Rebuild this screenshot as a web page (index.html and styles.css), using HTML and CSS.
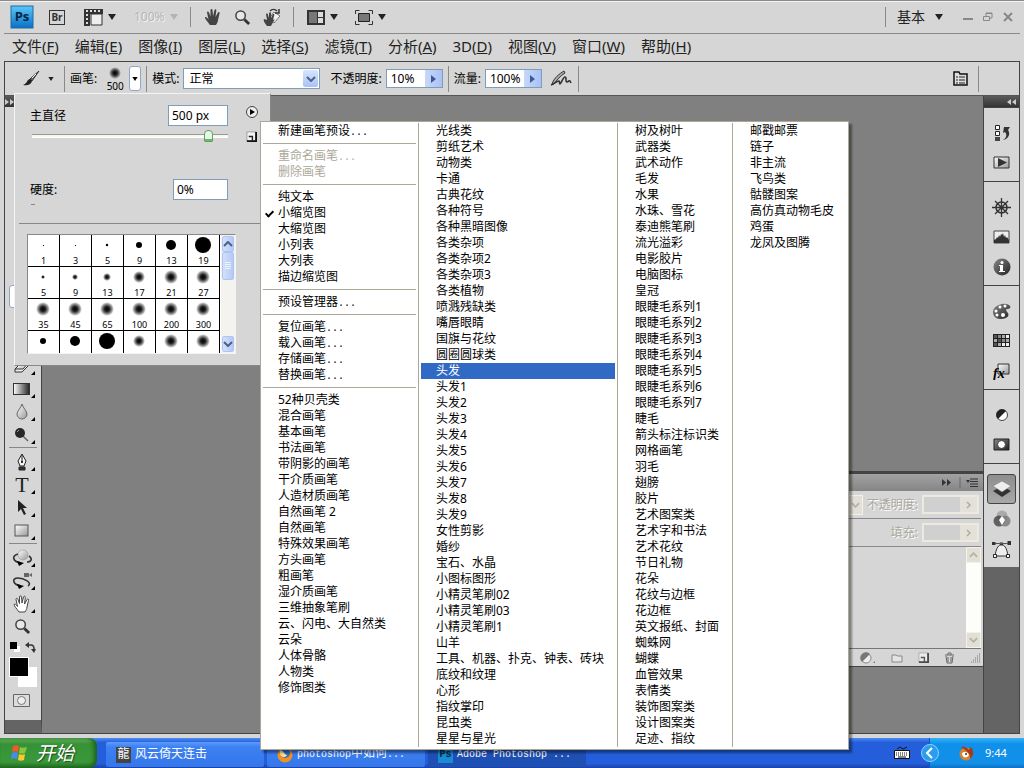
FILE: index.html
```html
<!DOCTYPE html>
<html lang="zh-CN">
<head>
    <meta charset="UTF-8">
    <meta name="viewport" content="width=device-width, initial-scale=1.0">
    <title>Adobe Photoshop</title>
    <link rel="stylesheet" href="styles.css">
</head>
<body>
    <!-- 公用渐变和图形 -->
    <svg class="defs" width="0" height="0" aria-hidden="true">
        <defs>
            <radialGradient id="soft"><stop offset="0" stop-color="#000"/><stop offset=".35" stop-color="#222"/><stop offset="1" stop-color="#000" stop-opacity="0"/></radialGradient>
            <linearGradient id="metal" x1="0" y1="0" x2="1" y2="1"><stop offset="0" stop-color="#fff"/><stop offset="1" stop-color="#999"/></linearGradient>
            <linearGradient id="dark" x1="0" y1="0" x2="1" y2="1"><stop offset="0" stop-color="#888"/><stop offset="1" stop-color="#222"/></linearGradient>
            <linearGradient id="fade"><stop offset="0" stop-color="#fff"/><stop offset="1" stop-color="#222"/></linearGradient>
            <symbol id="down" viewBox="0 0 8 6"><path d="M0 0h8L4 6z" fill="currentColor"/></symbol>
            <symbol id="chevron" viewBox="0 0 10 6"><path d="M1 1l4 4 4-4" fill="none" stroke="currentColor" stroke-width="2"/></symbol>
            <symbol id="zoomer" viewBox="0 0 18 18"><circle cx="7" cy="7" r="5" fill="#e8e8e8" stroke="#444" stroke-width="1.6"/><path d="M11 11l5 5" stroke="#333" stroke-width="3"/></symbol>
            <symbol id="newdoc" viewBox="0 0 12 12"><path d="M1 1h10v10H1z" fill="#f4f4f4" stroke="#999"/><path d="M11 1v10H1" fill="none" stroke="#111" stroke-width="2"/><path d="M3 6h4v5" fill="none" stroke="#222" stroke-width="1.5"/></symbol>
            <symbol id="hand" viewBox="0 0 18 18"><path d="M6 17C4 14 1 11 1 9.500c1-1 2 0 3.500 2L3 4.500c0-1.500 1.500-1.500 2 0l1.500 4V2c0-1.500 2-1.500 2 0l.5 6 1.500-6c.5-1.300 2-1 1.800.5L11.500 9 14 4.500c.8-1 2-.5 1.500 1L14 12c0 2-1 3-2 5z"/></symbol>
        </defs>
    </svg>

    <div class="desktop">
        <div class="app">
            <header class="app-bar">
                <svg class="ps-logo" width="24" height="24" viewBox="0 0 24 24">
                    <defs><linearGradient id="psbg" x1="0" y1="0" x2="0" y2="1"><stop offset="0" stop-color="#5ac8fa"/><stop offset="1" stop-color="#0a6fc4"/></linearGradient></defs>
                    <rect x="1" y="1" width="22" height="22" fill="url(#psbg)" stroke="#1c6aa8"/>
                    <text x="12" y="16" text-anchor="middle" class="ps-text">Ps</text>
                </svg>
                <button class="bridge" type="button">Br</button>
                <button class="icon-btn pair" type="button" aria-label="查看额外内容">
                    <svg width="19" height="17" viewBox="0 0 19 17"><path d="M0 0h19v5H6v12H0z" fill="#333"/><path d="M7 5h11v11H7z" fill="#eee" stroke="#333"/><path d="M2 2h2m2 0h2m2 0h2m2 0h2M2 6h2m-2 4h2m-2 4h2" stroke="#ddd" stroke-width="2"/></svg>
                    <svg class="arrow" width="8" height="6"><use href="#down"/></svg>
                </button>
                <button class="icon-btn zoom-level" type="button" disabled>100% <svg class="arrow" width="8" height="6"><use href="#down"/></svg></button>
                <span class="bar-sep"></span>
                <button class="icon-btn" type="button" aria-label="抓手"><svg width="18" height="18" fill="#444"><use href="#hand"/></svg></button>
                <button class="icon-btn" type="button" aria-label="缩放"><svg width="17" height="17"><use href="#zoomer"/></svg></button>
                <button class="icon-btn" type="button" aria-label="旋转视图">
                    <svg width="18" height="18" viewBox="0 0 18 18"><path d="M11 4l6 4-6 7-5-4z" fill="#f2f2f2" stroke="#777"/><path d="M4 18C2 15 0 13 1 11l3 1-1-6c1-1 2 0 2 1l1 3V5c1-1 2-1 2 0v5l2-4c1 0 2 0 1 2l-1 4 2-1-3 5-1 2z" fill="#444"/><path d="M7 3c2-2 5-2 7 0m2-2v4h-4" fill="none" stroke="#333" stroke-width="1.500"/></svg>
                </button>
                <span class="bar-sep"></span>
                <button class="icon-btn pair" type="button" aria-label="排列文档">
                    <svg width="18" height="15" viewBox="0 0 18 15"><path d="M0 0h18v15H0z" fill="#333"/><path d="M2 2h8v11H2z" fill="#777"/><path d="M11 2h5v5h-5zM11 8h5v5h-5z" fill="#ddd"/></svg>
                    <svg class="arrow" width="8" height="6"><use href="#down"/></svg>
                </button>
                <button class="icon-btn pair screen" type="button" aria-label="屏幕模式">
                    <svg width="18" height="15" viewBox="0 0 18 15"><path d="M.5 4V.5h4m9 0h4V4m0 7v3.500h-4m-9 0h-4V11" fill="none" stroke="#333"/><path d="M3.500 3.500h11v8h-11z" fill="#777" stroke="#222"/></svg>
                    <svg class="arrow" width="8" height="6"><use href="#down"/></svg>
                </button>
                <span class="bar-sep push"></span>
                <button class="icon-btn mode" type="button">基本 <svg class="arrow" width="8" height="6"><use href="#down"/></svg></button>
                <div class="win-btns">
                    <button type="button" aria-label="最小化"><svg width="10" height="10"><path d="M0 7h10" stroke="#888" stroke-width="2"/></svg></button>
                    <button type="button" aria-label="还原"><svg width="10" height="10" fill="none" stroke="#888"><path d="M3 4V1h6v5H7M.5 4.500h6v4h-6zM3 1.500h6"/></svg></button>
                    <button type="button" aria-label="关闭"><svg width="10" height="10"><path d="M1 1l8 8m0-8L1 9" stroke="#888" stroke-width="2"/></svg></button>
                </div>
            </header>

            <nav class="menu-bar">
                <button type="button">文件(<u>F</u>)</button>
                <button type="button">编辑(<u>E</u>)</button>
                <button type="button">图像(<u>I</u>)</button>
                <button type="button">图层(<u>L</u>)</button>
                <button type="button">选择(<u>S</u>)</button>
                <button type="button">滤镜(<u>T</u>)</button>
                <button type="button">分析(<u>A</u>)</button>
                <button type="button">3D(<u>D</u>)</button>
                <button type="button">视图(<u>V</u>)</button>
                <button type="button">窗口(<u>W</u>)</button>
                <button type="button">帮助(<u>H</u>)</button>
            </nav>

            <div class="frame">
                <div class="options-bar">
                    <span class="grip-v"></span>
                    <button class="icon-btn brush-tool" type="button" aria-label="画笔工具">
                        <svg width="18" height="18" viewBox="0 0 18 18"><path d="M17 1L8 9l2 2z" fill="#666" stroke="#333"/><path d="M8 9c-3 0-2 4-7 6 4 1 8 0 9-4z" fill="#222"/><path d="M10 8l4-4" stroke="#eee"/></svg>
                        <svg width="6" height="4"><use href="#down"/></svg>
                    </button>
                    <span class="opt-sep"></span>
                    <span class="opt-label">画笔:</span>
                    <button class="brush-thumb" type="button" aria-label="画笔预设">
                        <svg width="14" height="14"><circle cx="7" cy="7" r="6" fill="url(#soft)"/></svg>
                        <span>500</span>
                    </button>
                    <button class="drop" type="button" aria-label="打开画笔选取器"><svg width="6" height="4"><use href="#down"/></svg></button>
                    <span class="opt-sep"></span>
                    <label class="opt-label" for="blend">模式:</label>
                    <span class="select-box">
                        <select id="blend"><option>正常</option></select>
                        <span class="select-arrow"><svg width="10" height="6"><use href="#chevron"/></svg></span>
                    </span>
                    <label class="opt-label opacity-label" for="opacity">不透明度:</label>
                    <span class="spin"><input id="opacity" type="text" value="10%"><button type="button" aria-label="调整不透明度"><svg width="5" height="8"><path d="M0 0v8l5-4z" fill="#3c5a96"/></svg></button></span>
                    <span class="opt-sep"></span>
                    <label class="opt-label" for="flow">流量:</label>
                    <span class="spin"><input id="flow" type="text" value="100%"><button type="button" aria-label="调整流量"><svg width="5" height="8"><path d="M0 0v8l5-4z" fill="#3c5a96"/></svg></button></span>
                    <button class="icon-btn airbrush" type="button" aria-label="喷枪">
                        <svg width="22" height="18" viewBox="0 0 22 18"><path d="M2 14C4 8 9 4 14 1l1 2C10 6 7 10 4 14z" fill="#aaa" stroke="#333"/><path d="M1 15c4-1 5-4 8-4 1 0 0 3 1 3s3-7 5-7 0 5 2 5 1-2 3-1l1 2" fill="none" stroke="#333" stroke-width="1.600"/></svg>
                    </button>
                    <span class="opt-sep"></span>
                    <button class="icon-btn push" type="button" aria-label="切换画笔面板">
                        <svg width="15" height="15" viewBox="0 0 15 15"><path d="M1 3V1h5l1 2h7v11H1z" fill="#ddd" stroke="#111" stroke-width="1.500"/><path d="M3 6h2m1 0h6M3 9h2m1 0h6M3 12h2m1 0h6" stroke="#222"/></svg>
                    </button>
                    <span class="opt-sep last"></span>
                </div>

                <div class="workspace">
                    <aside class="tools">
                        <div class="panel-top"><svg width="10" height="6" fill="#ccc"><path d="M0 0v6l4-3zM5 0v6l4-3z"/></svg></div>
                        <div class="tool-list">
                            <button class="tool active" type="button" aria-label="画笔"></button>
                            <button class="tool" type="button" aria-label="仿制图章"></button>
                            <button class="tool" type="button" aria-label="历史记录画笔"></button>
                            <button class="tool more" type="button" aria-label="橡皮擦"><svg width="18" height="16"><path d="M2 11l7-7h7l-6 7zM2 11v3h7l7-7V4" fill="#eee" stroke="#333"/></svg></button>
                            <button class="tool more" type="button" aria-label="渐变"><svg width="18" height="14"><rect x=".5" y="1.500" width="16" height="11" fill="url(#fade)" stroke="#333"/></svg></button>
                            <button class="tool more" type="button" aria-label="模糊"><svg width="14" height="17"><path d="M7 1c1 4 5 7 5 10a5 5 0 0 1-10 0c0-3 4-6 5-10z" fill="url(#metal)" stroke="#666"/></svg></button>
                            <button class="tool more" type="button" aria-label="减淡"><svg width="16" height="16"><path d="M8 8l6 6" stroke="#666" stroke-width="1.500"/><circle cx="6" cy="6" r="5" fill="#262626"/><path d="M3 5l2-2" stroke="#999"/></svg></button>
                            <hr>
                            <button class="tool more" type="button" aria-label="钢笔"><svg width="14" height="18"><path d="M7 1l4 7-2 5H5L3 8z" fill="#f4f4f4" stroke="#222"/><path d="M7 2v7M4 14h6v3H4z" stroke="#222" fill="#333"/><circle cx="7" cy="9" r="1"/></svg></button>
                            <button class="tool more type-tool" type="button" aria-label="文字">T</button>
                            <button class="tool more" type="button" aria-label="路径选择"><svg width="14" height="17"><path d="M3 1v12l3-3 3 6 2-1-3-6h4z" fill="#222"/></svg></button>
                            <button class="tool more" type="button" aria-label="矩形"><svg width="16" height="14"><rect x="1" y="1" width="13" height="11" fill="url(#metal)" stroke="#555"/></svg></button>
                            <hr>
                            <button class="tool more" type="button" aria-label="3D 旋转"><svg width="20" height="18"><path d="M6 5C-1 7 1 13 9 14m8-7c4 3 2 6-2 6" fill="none" stroke="#333" stroke-width="1.600"/><circle cx="11" cy="6" r="5" fill="url(#metal)" stroke="#888" stroke-width=".5"/><path d="M5 12l7 2-5 3z"/></svg></button>
                            <button class="tool more" type="button" aria-label="3D 环绕"><svg width="20" height="18"><path d="M12 1h5v4h-5zM17 3l3-2v4z" fill="#666"/><path d="M9 14C1 13-1 6 6 6c6 0 15 5 10 8" fill="none" stroke="#333" stroke-width="1.600"/><path d="M5 12l7 2-5 3z"/></svg></button>
                            <button class="tool more" type="button" aria-label="抓手"><svg width="18" height="18" fill="#fff" stroke="#444"><use href="#hand"/></svg></button>
                            <button class="tool" type="button" aria-label="缩放"><svg width="17" height="17"><use href="#zoomer"/></svg></button>
                            <div class="swap">
                                <svg width="11" height="11"><path d="M4 4h6v6H4z" fill="#fff"/><path d="M0 0h7v7H0z"/></svg>
                                <svg width="11" height="11"><path d="M2 3h4q3 0 3 4" fill="none" stroke="#333" stroke-width="1.500"/><path d="M0 3l4-3v6zM9 11L6 7h5z" fill="#333"/></svg>
                            </div>
                            <div class="swatches">
                                <button class="fore" type="button" aria-label="前景色"></button>
                                <button class="back" type="button" aria-label="背景色"></button>
                            </div>
                            <button class="tool mask" type="button" aria-label="快速蒙版"><svg width="18" height="14"><path d="M.5.500h16v12H.5z" fill="#ddd" stroke="#666"/><circle cx="8.500" cy="6.500" r="4" fill="#eee" stroke="#777"/></svg></button>
                        </div>
                    </aside>

                    <main class="canvas">
                        <section class="layers">
                            <div class="layers-top">
                                <svg width="10" height="7" fill="#333"><path d="M0 0v7l4-3.500zM5 0v7l4-3.500z"/></svg>
                                <svg width="20" height="11"><path d="M1 0v11" stroke="#666"/><path d="M7 3h4L9 6z" fill="#333"/><path d="M11 2h8M11 4.500h8M11 7h8M11 9.500h8" stroke="#333"/></svg>
                            </div>
                            <div class="layers-row">
                                <button class="ghost-btn" type="button" disabled aria-label="混合模式"><svg width="9" height="6"><use href="#chevron"/></svg></button>
                                <label for="layerOpacity">不透明度:</label>
                                <span class="spin off"><input id="layerOpacity" type="text" disabled><button type="button" disabled aria-label="不透明度"><svg width="5" height="8"><path d="M1 1l3 3-3 3" fill="none" stroke="#aaa" stroke-width="1.500"/></svg></button></span>
                            </div>
                            <div class="layers-row">
                                <label for="layerFill">填充:</label>
                                <span class="spin off"><input id="layerFill" type="text" disabled><button type="button" disabled aria-label="填充"><svg width="5" height="8"><path d="M1 1l3 3-3 3" fill="none" stroke="#aaa" stroke-width="1.500"/></svg></button></span>
                            </div>
                            <div class="layers-list">
                                <div class="ghost-scroll">
                                    <button class="ghost-btn up" type="button" disabled aria-label="向上"><svg width="9" height="6"><use href="#chevron"/></svg></button>
                                    <button class="ghost-btn" type="button" disabled aria-label="向下"><svg width="9" height="6"><use href="#chevron"/></svg></button>
                                </div>
                            </div>
                            <div class="layers-foot">
                                <svg width="14" height="12"><path d="M1 1h11v10H1z" fill="#999" stroke="#555"/></svg>
                                <svg width="16" height="12"><circle cx="6" cy="6" r="5" fill="#eee" stroke="#888"/><path d="M2 10A5 5 0 0 1 10 2z" fill="#777"/><path d="M13 11h2v-2z" fill="#777"/></svg>
                                <svg width="12" height="10"><path d="M1 2h4l1 1h5v6H1z" fill="#e4e4e4" stroke="#888"/></svg>
                                <svg width="11" height="11" opacity=".7"><use href="#newdoc"/></svg>
                                <svg width="11" height="12"><path d="M1 3h9M4 3V1h3v2M2 4l1 7h5l1-7M4 5v5M7 5v5" fill="none" stroke="#666"/></svg>
                                <svg width="10" height="10"><path d="M1 9h1m1 0h1m1 0h1m1 0h1m1 0h1M3 7h1m1 0h1m1 0h1m1 0h1M5 5h1m1 0h1m1 0h1M7 3h1m1 0h1M9 1h1" stroke="#777"/></svg>
                            </div>
                        </section>
                    </main>

                    <aside class="dock">
                        <div class="panel-top end"><svg width="9" height="6" fill="#ccc"><path d="M4 0v6L0 3zM9 0v6L5 3z"/></svg></div>
                        <div class="dock-group">
                            <span class="grip-h"></span>
                            <button type="button" aria-label="历史记录"><svg width="16" height="18"><path d="M1.500 1.500h4v4h-4zM1.500 7.500h4v4h-4z" fill="#fff" stroke="#222"/><path d="M1 13h5v4H1z" fill="#444"/><path d="M9 16c4-2 4-6 2-8l-2 1 1-6h6l-2 3c3 4 0 9-5 10z" fill="#333"/></svg></button>
                            <button type="button" aria-label="动作"><svg width="18" height="14"><path d="M1 1h15v11H1z" fill="url(#metal)" stroke="#333"/><path d="M5 2v9l9-4.500z" fill="#333"/></svg></button>
                        </div>
                        <div class="dock-group">
                            <span class="grip-h"></span>
                            <button type="button" aria-label="导航器"><svg width="19" height="19" fill="none" stroke="#333"><circle cx="9.500" cy="9.500" r="5.500" stroke-width="1.500"/><circle cx="9.500" cy="9.500" r="1.500"/><path d="M9.500 0v19M0 9.500h19M3 3l13 13M16 3L3 16" stroke-width="1.300"/></svg></button>
                            <button type="button" aria-label="直方图"><svg width="18" height="14"><path d="M1 1h15v12H1z" fill="#eee" stroke="#444"/><path d="M1 13v-3l2-1 1-2 1 1 1-3 1 2 1-3 1 1 1-2 1 4 1-2 1 3 1-1 2 3v3z" fill="#333"/></svg></button>
                            <button type="button" aria-label="信息"><svg width="18" height="18"><circle cx="9" cy="9" r="8.500" fill="url(#dark)"/><path d="M6 7h4v6h2v1H6v-1h1V8H6z" fill="#fff"/><circle cx="9" cy="4.500" r="1.500" fill="#fff"/></svg></button>
                        </div>
                        <div class="dock-group">
                            <span class="grip-h"></span>
                            <button type="button" aria-label="颜色"><svg width="19" height="17"><path d="M1 9C1 4 8 0 14 1c6 1 5 5 2 5s-2 2 0 4c2 4-3 6-8 6-4 0-7-3-7-7z" fill="url(#dark)"/><g fill="#fff"><circle cx="4" cy="8" r="1.500"/><circle cx="8" cy="4" r="1.500"/><circle cx="13" cy="3" r="1.500"/><circle cx="5" cy="12" r="1.500"/><circle cx="11" cy="12" r="2"/></g></svg></button>
                            <button type="button" aria-label="色板"><svg width="18" height="14"><path d="M0 0h17v13H0z" fill="#222"/><path d="M1 1h3v3H1zM5 5h3v3H5zM1 9h3v3H1z" fill="#555"/><path d="M5 1h3v3H5zM9 5h3v3H9z" fill="#888"/><path d="M9 1h3v3H9zM13 5h3v3h-3zM5 9h3v3H5zM1 5h3v3H1z" fill="#aaa"/><path d="M13 1h3v3h-3zM9 9h3v3H9zM13 9h3v3h-3z" fill="#eee"/></svg></button>
                            <button class="fx" type="button" aria-label="样式"><svg width="18" height="18"><path d="M5 2h11v10H5z" fill="url(#metal)" stroke="#333"/><text x="0" y="16">fx</text></svg></button>
                        </div>
                        <div class="dock-group">
                            <span class="grip-h"></span>
                            <button type="button" aria-label="调整"><svg width="14" height="14"><circle cx="7" cy="7" r="5.500" fill="#fff" stroke="#444"/><path d="M3 11A5.500 5.500 0 0 1 11 3z" fill="#222"/></svg></button>
                            <button type="button" aria-label="蒙版"><svg width="18" height="14"><path d="M1 1h15v11H1z" fill="url(#dark)" stroke="#222"/><circle cx="8.500" cy="6.500" r="4" fill="#fff" stroke="#333"/></svg></button>
                        </div>
                        <div class="dock-group">
                            <span class="grip-h"></span>
                            <button class="on" type="button" aria-label="图层"><svg width="20" height="18"><path d="M10 6l9 5-9 6-9-6z" fill="#333"/><path d="M10 1l9 5-9 6-9-6z" fill="#eee" stroke="#777" stroke-width=".5"/></svg></button>
                            <button type="button" aria-label="通道"><svg width="18" height="18"><circle cx="9" cy="6" r="5.500" fill="#aaa"/><circle cx="6" cy="11" r="5.500" fill="#444" fill-opacity=".8"/><circle cx="12" cy="11" r="5.500" fill="#777" fill-opacity=".8"/><path d="M9 6l3 4-3 5-3-5z" fill="#fff"/></svg></button>
                            <button type="button" aria-label="路径"><svg width="19" height="17"><path d="M3 15C4 9 5 5 9.500 3 14 5 15 9 16 15z" fill="#eee" stroke="#333"/><path d="M0 1h3.500v3H0zM15.500 0H19v4h-3.500zM8 1.500h3v3H8z" fill="#333"/><path d="M3 2.500h13" stroke="#555"/><path d="M1.500 13.500h3v3h-3zM14.500 13.500h3v3h-3z" fill="#fff" stroke="#222"/></svg></button>
                        </div>
                    </aside>
                </div>
            </div>
        </div>

        <footer class="taskbar">
            <button class="start" type="button">
                <svg width="20" height="18" viewBox="0 0 20 18"><path d="M3 2c2-1 4-1 6 0L8 8C6 7 4 7 2 8z" fill="#f0592b"/><path d="M10 3c2 1 4 1 7 0l-2 6c-2 1-4 1-6 0z" fill="#8cc63e"/><path d="M2 9c2-1 4-1 6 0l-1 6c-2-1-4-1-6 0z" fill="#4a8af0"/><path d="M9 10c2 1 4 1 6 0l-1 6c-2 1-4 1-6 0z" fill="#fbc92c"/></svg>
                <span>开始</span>
            </button>
            <button class="task" type="button"><span class="dragon">龍</span><span class="cjk">风云倚天连击</span></button>
            <button class="task" type="button"><svg width="16" height="16"><circle cx="8" cy="8" r="7.500" fill="#f09020"/><circle cx="8" cy="6" r="5" fill="#2a6fd0"/><path d="M3 3c5 1 3 4 7 5-1 3-6 3-7-1z" fill="#ffe08a"/></svg><span>photoshop<span class="cjk">中如何</span>...</span></button>
            <button class="task pressed" type="button"><span class="mini-ps">Ps</span><span>Adobe Photoshop ...</span></button>
            <svg class="keyboard" width="16" height="14"><path d="M3 3l3-2 3 2 4-2" fill="none" stroke="#111"/><path d="M.5 4.500h15v8H.5z" fill="#fff" stroke="#111"/><path d="M2 7h12M2 9h12" stroke="#111" stroke-dasharray="1 1"/><path d="M4 11h8" stroke="#111"/></svg>
            <div class="tray">
                <button class="tray-toggle" type="button" aria-label="显示隐藏的图标"><svg width="18" height="18"><circle cx="9" cy="9" r="8.500" fill="#2a9df0" stroke="#8fd0ff"/><path d="M11 4L6 9l5 5" fill="none" stroke="#fff" stroke-width="2"/></svg></button>
                <svg width="16" height="16"><circle cx="7" cy="9" r="6.500" fill="#d9822b"/><path d="M2 2c4-1 6 1 8 3l2-3c3 4 3 9-1 12 1-5-4-9-9-12z" fill="#a8381c"/><path d="M3 8c3-2 6-1 7 2-2 4-7 3-7-2z" fill="#fff"/><circle cx="7" cy="9" r="1" fill="#333"/></svg>
                <time>9:44</time>
            </div>
        </footer>
    </div>

    <!-- 画笔选取器 -->
    <div class="picker">
        <div class="picker-head">
            <div class="picker-controls">
                <div class="field-row"><label for="size">主直径</label><input id="size" class="num wide" type="text" value="500 px"></div>
                <input class="slider" type="range" min="0" max="100" value="92" aria-label="主直径">
                <div class="field-row hardness"><label for="hard">硬度:</label><input id="hard" class="num" type="text" value="0%"></div>
                <div class="stub"></div>
            </div>
            <div class="picker-side">
                <button type="button" aria-label="画笔菜单"><svg width="12" height="12"><circle cx="6" cy="6" r="5.500" fill="#eee" stroke="#444"/><path d="M4 3v6l5-3z"/></svg></button>
                <button type="button" aria-label="新建画笔"><svg width="11" height="11"><use href="#newdoc"/></svg></button>
            </div>
        </div>
        <div class="brush-box">
            <div class="brush-grid">
                <button type="button"><svg width="31" height="21"><path d="M15 10h1v1h-1z"/></svg>1</button>
                <button type="button"><svg width="31" height="21"><path d="M15 10h1v1h-1z"/></svg>3</button>
                <button type="button"><svg width="31" height="21"><circle cx="15" cy="10" r="1.200"/></svg>5</button>
                <button type="button"><svg width="31" height="21"><circle cx="15" cy="10" r="3"/></svg>9</button>
                <button type="button"><svg width="31" height="21"><circle cx="15" cy="10" r="5"/></svg>13</button>
                <button type="button"><svg width="31" height="21"><circle cx="15" cy="10" r="8"/></svg>19</button>
                <button type="button"><svg width="31" height="21"><circle cx="15" cy="10" r="2" fill="url(#soft)"/></svg>5</button>
                <button type="button"><svg width="31" height="21"><circle cx="15" cy="10" r="3" fill="url(#soft)"/></svg>9</button>
                <button type="button"><svg width="31" height="21"><circle cx="15" cy="10" r="4" fill="url(#soft)"/></svg>13</button>
                <button type="button"><svg width="31" height="21"><circle cx="15" cy="10" r="6" fill="url(#soft)"/></svg>17</button>
                <button type="button"><svg width="31" height="21"><circle cx="15" cy="10" r="7" fill="url(#soft)"/></svg>21</button>
                <button type="button"><svg width="31" height="21"><circle cx="15" cy="10" r="7" fill="url(#soft)"/></svg>27</button>
                <button type="button"><svg width="31" height="21"><circle cx="15" cy="10" r="7" fill="url(#soft)"/></svg>35</button>
                <button type="button"><svg width="31" height="21"><circle cx="15" cy="10" r="7" fill="url(#soft)"/></svg>45</button>
                <button type="button"><svg width="31" height="21"><circle cx="15" cy="10" r="7" fill="url(#soft)"/></svg>65</button>
                <button type="button"><svg width="31" height="21"><circle cx="15" cy="10" r="7" fill="url(#soft)"/></svg>100</button>
                <button type="button"><svg width="31" height="21"><circle cx="15" cy="10" r="7" fill="url(#soft)"/></svg>200</button>
                <button type="button"><svg width="31" height="21"><circle cx="15" cy="10" r="7" fill="url(#soft)"/></svg>300</button>
                <button type="button" aria-label="硬边 9"><svg width="31" height="21"><circle cx="15" cy="10" r="3"/></svg></button>
                <button type="button" aria-label="硬边 13"><svg width="31" height="21"><circle cx="15" cy="10" r="5"/></svg></button>
                <button type="button" aria-label="硬边 19"><svg width="31" height="21"><circle cx="15" cy="10" r="8"/></svg></button>
                <button type="button" aria-label="柔边 17"><svg width="31" height="21"><circle cx="15" cy="10" r="6" fill="url(#soft)"/></svg></button>
                <button type="button" aria-label="柔边 45"><svg width="31" height="21"><circle cx="15" cy="10" r="7" fill="url(#soft)"/></svg></button>
                <button type="button" aria-label="柔边 65"><svg width="31" height="21"><circle cx="15" cy="10" r="7" fill="url(#soft)"/></svg></button>
            </div>
            <div class="xp-scroll">
                <button class="up" type="button" aria-label="向上滚动"><svg width="10" height="6"><use href="#chevron"/></svg></button>
                <div class="xp-thumb"><svg width="6" height="8"><path d="M0 .5h6M0 2.500h6M0 4.500h6M0 6.500h6" stroke="#eef4fe"/></svg></div>
                <button class="down" type="button" aria-label="向下滚动"><svg width="10" height="6"><use href="#chevron"/></svg></button>
            </div>
        </div>
    </div>

    <!-- 画笔弹出菜单 -->
    <div class="popup" role="menu">
        <div class="col col-main">
            <button type="button">新建画笔预设<i>...</i></button>
            <hr>
            <button type="button" disabled>重命名画笔<i>...</i></button>
            <button type="button" disabled>删除画笔</button>
            <hr>
            <button type="button">纯文本</button>
            <button type="button" class="checked">小缩览图</button>
            <button type="button">大缩览图</button>
            <button type="button">小列表</button>
            <button type="button">大列表</button>
            <button type="button">描边缩览图</button>
            <hr>
            <button type="button">预设管理器<i>...</i></button>
            <hr>
            <button type="button">复位画笔<i>...</i></button>
            <button type="button">载入画笔<i>...</i></button>
            <button type="button">存储画笔<i>...</i></button>
            <button type="button">替换画笔<i>...</i></button>
            <hr>
            <button type="button">52种贝壳类</button>
            <button type="button">混合画笔</button>
            <button type="button">基本画笔</button>
            <button type="button">书法画笔</button>
            <button type="button">带阴影的画笔</button>
            <button type="button">干介质画笔</button>
            <button type="button">人造材质画笔</button>
            <button type="button">自然画笔 2</button>
            <button type="button">自然画笔</button>
            <button type="button">特殊效果画笔</button>
            <button type="button">方头画笔</button>
            <button type="button">粗画笔</button>
            <button type="button">湿介质画笔</button>
            <button type="button">三维抽象笔刷</button>
            <button type="button">云、闪电、大自然类</button>
            <button type="button">云朵</button>
            <button type="button">人体骨骼</button>
            <button type="button">人物类</button>
            <button type="button">修饰图类</button>
        </div>
        <div class="col col-wide">
            <button type="button">光线类</button>
            <button type="button">剪纸艺术</button>
            <button type="button">动物类</button>
            <button type="button">卡通</button>
            <button type="button">古典花纹</button>
            <button type="button">各种符号</button>
            <button type="button">各种黑暗图像</button>
            <button type="button">各类杂项</button>
            <button type="button">各类杂项2</button>
            <button type="button">各类杂项3</button>
            <button type="button">各类植物</button>
            <button type="button">喷溅残缺类</button>
            <button type="button">嘴唇眼睛</button>
            <button type="button">国旗与花纹</button>
            <button type="button">圆圈圆球类</button>
            <button type="button" class="current">头发</button>
            <button type="button">头发1</button>
            <button type="button">头发2</button>
            <button type="button">头发3</button>
            <button type="button">头发4</button>
            <button type="button">头发5</button>
            <button type="button">头发6</button>
            <button type="button">头发7</button>
            <button type="button">头发8</button>
            <button type="button">头发9</button>
            <button type="button">女性剪影</button>
            <button type="button">婚纱</button>
            <button type="button">宝石、水晶</button>
            <button type="button">小图标图形</button>
            <button type="button">小精灵笔刷02</button>
            <button type="button">小精灵笔刷03</button>
            <button type="button">小精灵笔刷1</button>
            <button type="button">山羊</button>
            <button type="button">工具、机器、扑克、钟表、砖块</button>
            <button type="button">底纹和纹理</button>
            <button type="button">心形</button>
            <button type="button">指纹掌印</button>
            <button type="button">昆虫类</button>
            <button type="button">星星与星光</button>
        </div>
        <div class="col">
            <button type="button">树及树叶</button>
            <button type="button">武器类</button>
            <button type="button">武术动作</button>
            <button type="button">毛发</button>
            <button type="button">水果</button>
            <button type="button">水珠、雪花</button>
            <button type="button">泰迪熊笔刷</button>
            <button type="button">流光溢彩</button>
            <button type="button">电影胶片</button>
            <button type="button">电脑图标</button>
            <button type="button">皇冠</button>
            <button type="button">眼睫毛系列1</button>
            <button type="button">眼睫毛系列2</button>
            <button type="button">眼睫毛系列3</button>
            <button type="button">眼睫毛系列4</button>
            <button type="button">眼睫毛系列5</button>
            <button type="button">眼睫毛系列6</button>
            <button type="button">眼睫毛系列7</button>
            <button type="button">睫毛</button>
            <button type="button">箭头标注标识类</button>
            <button type="button">网格画笔</button>
            <button type="button">羽毛</button>
            <button type="button">翅膀</button>
            <button type="button">胶片</button>
            <button type="button">艺术图案类</button>
            <button type="button">艺术字和书法</button>
            <button type="button">艺术花纹</button>
            <button type="button">节日礼物</button>
            <button type="button">花朵</button>
            <button type="button">花纹与边框</button>
            <button type="button">花边框</button>
            <button type="button">英文报纸、封面</button>
            <button type="button">蜘蛛网</button>
            <button type="button">蝴蝶</button>
            <button type="button">血管效果</button>
            <button type="button">表情类</button>
            <button type="button">装饰图案类</button>
            <button type="button">设计图案类</button>
            <button type="button">足迹、指纹</button>
        </div>
        <div class="col">
            <button type="button">邮戳邮票</button>
            <button type="button">链子</button>
            <button type="button">非主流</button>
            <button type="button">飞鸟类</button>
            <button type="button">骷髅图案</button>
            <button type="button">高仿真动物毛皮</button>
            <button type="button">鸡蛋</button>
            <button type="button">龙凤及图腾</button>
        </div>
    </div>
</body>
</html>
```

FILE: styles.css
```css
* {
    box-sizing: border-box;
}

body {
    margin: 0;
    font-family: "Noto Sans", "Noto Sans CJK SC", sans-serif;
    font-size: 12px;
    line-height: 16px;
    color: #000;
    overflow: hidden;
}

button {
    padding: 0;
    border: none;
    background: none;
    font: inherit;
    color: inherit;
    white-space: nowrap;
}

svg {
    display: block;
    flex: none;
}

.defs {
    position: absolute;
}

.desktop {
    display: flex;
    flex-direction: column;
    height: 100vh;
}

/* 程序窗口 */
.app {
    flex: 1;
    display: flex;
    flex-direction: column;
    min-height: 0;
    padding: 0 4px 4px;
    border-top: 1px solid #8a8a8a;
    background: #d6d6d6;
    box-shadow: inset 0 1px 0 #f4f4f4;
}

.app-bar {
    display: flex;
    align-items: center;
    height: 33px;
    padding: 0 7px 0 6px;
    border-bottom: 1px solid #8a8a8a;
}

.ps-text {
    font: bold 13px "Open Sans", sans-serif;
    fill: #06243e;
}

.bridge {
    width: 16px;
    height: 15px;
    margin: 0 19px 0 15px;
    border: 1px solid #333;
    font-size: 10px;
    font-weight: bold;
    line-height: 13px;
    color: #333;
}

.icon-btn {
    display: flex;
    align-items: center;
    color: #222;
}

.pair {
    gap: 5px;
}

.zoom-level {
    gap: 5px;
    margin-left: 18px;
    font-size: 12px;
    color: #b4b4b4;
    text-shadow: 1px 1px 0 #f4f4f4;
}

.bar-sep {
    width: 1px;
    height: 20px;
    margin: 0 13px 0 12px;
    background: #8a8a8a;
}

.app-bar .icon-btn + .icon-btn:not(.zoom-level) {
    margin-left: 12px;
}

.app-bar .icon-btn + .icon-btn.screen {
    margin-left: 17px;
}

.app-bar .push,
.options-bar .push {
    margin-left: auto;
}

.app-bar .push {
    margin-right: 11px;
}

.mode {
    gap: 10px;
    font-size: 14px;
}

.win-btns {
    display: flex;
    gap: 10px;
    margin-left: 20px;
}

.menu-bar {
    display: flex;
    align-items: center;
    gap: 16px;
    height: 27px;
    padding: 0 8px 3px;
    font-size: 15px;
    line-height: 20px;
    color: #222;
}

.frame {
    flex: 1;
    display: flex;
    flex-direction: column;
    min-height: 0;
    border: 1px solid #444;
}

/* 选项栏 */
.options-bar {
    display: flex;
    align-items: center;
    height: 34px;
    padding-left: 4px;
    border-bottom: 1px solid #555;
}

.grip-v {
    width: 4px;
    height: 26px;
    background: radial-gradient(#888 35%, transparent 40%) 0 0 / 2px 2px;
}

.brush-tool {
    gap: 8px;
    margin: 0 10px 0 9px;
}

.opt-sep {
    width: 1px;
    height: 26px;
    margin: 0 5px;
    background: #8a8a8a;
}

.brush-tool + .opt-sep {
    margin-left: 0;
}

.opt-sep.last {
    margin: 0 40px 0 10px;
}

.opt-label {
    margin-right: 4px;
}

.opacity-label {
    margin-left: 10px;
}

.brush-thumb {
    display: flex;
    flex-direction: column;
    align-items: center;
    width: 28px;
    font-size: 10px;
    line-height: 12px;
}

.drop {
    display: flex;
    align-items: center;
    justify-content: center;
    width: 12px;
    height: 25px;
    border: 1px solid #8fa6cc;
    border-radius: 3px;
    background: #fff;
}

.select-box {
    position: relative;
    width: 137px;
    height: 21px;
}

.select-box select {
    width: 100%;
    height: 100%;
    padding: 0 5px;
    border: 1px solid #7f9db9;
    border-radius: 0;
    appearance: none;
    background: #fff;
    font: inherit;
}

.select-arrow {
    position: absolute;
    top: 2px;
    right: 2px;
    display: flex;
    align-items: center;
    justify-content: center;
    width: 15px;
    height: 17px;
    border-radius: 2px;
    background: linear-gradient(#d8e4fd, #a9c2f5);
    color: #4d6185;
    pointer-events: none;
}

.spin {
    display: flex;
    width: 57px;
    height: 19px;
    border: 1px solid #7f9db9;
    background: #fff;
}

.spin input {
    flex: 1;
    min-width: 0;
    padding: 0 0 0 4px;
    border: none;
    background: none;
    font: inherit;
}

.spin button {
    display: flex;
    align-items: center;
    justify-content: center;
    width: 17px;
    background: linear-gradient(90deg, #c8d8fa, #a9c2f5);
}

.airbrush {
    margin: 0 1px 0 8px;
}

/* 工作区 */
.workspace {
    flex: 1;
    display: flex;
    min-height: 0;
    background: #808080;
}

.panel-top {
    display: flex;
    align-items: center;
    flex: none;
    height: 11px;
    background: linear-gradient(#5c5c5c, #333);
}

.panel-top.end {
    justify-content: flex-end;
    padding-right: 3px;
}

.tools {
    display: flex;
    flex-direction: column;
    width: 37px;
    border-right: 1px solid #444;
    border-bottom: 13px solid #646464;
    background: #d6d6d6;
}

.tool-list {
    flex: 1;
    display: flex;
    flex-direction: column;
    justify-content: flex-end;
    padding: 0 4px 8px;
}

.tool-list hr {
    width: 100%;
    height: 1px;
    margin: 1px 0 2px;
    border: none;
    background: #888;
}

.tool {
    position: relative;
    display: flex;
    align-items: center;
    justify-content: center;
    flex: none;
    height: 23px;
    padding-right: 2px;
}

.tool.active {
    border: 1px solid #8fa6cc;
    border-radius: 3px;
    background: #fff;
}

.tool.more::after {
    content: "";
    position: absolute;
    right: 2px;
    bottom: 2px;
    border: 2px solid;
    border-color: transparent #000 #000 transparent;
}

.type-tool {
    font: 22px/22px "Liberation Serif", serif;
    color: #222;
}

.swap {
    display: flex;
    justify-content: space-between;
    padding: 4px 1px;
}

.swatches {
    display: flex;
    height: 31px;
}

.fore,
.back {
    width: 20px;
    height: 20px;
    border: 1px solid #fff;
    background: #000;
}

.fore {
    z-index: 1;
}

.back {
    margin: 10px 0 0 -11px;
    background: #fff;
}

.mask {
    margin-top: 1px;
}

.canvas {
    flex: 1;
    display: flex;
    align-items: flex-end;
    justify-content: flex-end;
    min-width: 0;
}

/* 图层面板 */
.layers {
    width: 260px;
    margin-bottom: 66px;
    border-top: 3px solid #444;
    border-bottom: 1px solid #444;
    background: #d6d6d6;
    color: #aaa89c;
    text-shadow: 1px 1px 0 #fff;
}

.layers-top {
    display: flex;
    align-items: center;
    justify-content: flex-end;
    gap: 7px;
    height: 17px;
    padding-right: 4px;
    background: linear-gradient(#a2a2a2, #858585);
}

.layers-row {
    display: flex;
    align-items: center;
    justify-content: flex-end;
    gap: 4px;
    height: 28px;
    margin-right: 2px;
    padding-right: 2px;
    border-bottom: 1px solid #888;
}

.spin.off {
    border: 2px solid #eceae0;
    background: #d0d0d0;
}

.spin.off button {
    background: #e4e2d8;
}

.ghost-btn {
    display: flex;
    align-items: center;
    justify-content: center;
    width: 15px;
    height: 20px;
    border: 1px solid #f4f2e8;
    background: #e2e0d6;
    color: #b4b2a6;
}

.layers-list {
    display: flex;
    justify-content: flex-end;
    height: 102px;
    margin-right: 2px;
    border-bottom: 1px solid #777;
}

.ghost-scroll {
    display: flex;
    flex-direction: column;
    justify-content: space-between;
    background: #fdfdfa;
}

.ghost-scroll .ghost-btn {
    height: 16px;
}

.up svg {
    transform: rotate(180deg);
}

.layers-foot {
    display: flex;
    align-items: center;
    justify-content: flex-end;
    gap: 15px;
    height: 17px;
    padding-right: 3px;
}

/* 右侧图标栏 */
.dock {
    display: flex;
    flex-direction: column;
    width: 36px;
    border-left: 1px solid #444;
    background: #646464;
}

.dock-group {
    display: flex;
    flex-direction: column;
    align-items: center;
    padding: 4px 0 3px;
    border-top: 1px solid #444;
    background: #d6d6d6;
}

.grip-h {
    width: 28px;
    height: 4px;
    margin-bottom: 2px;
    background: radial-gradient(#888 35%, transparent 40%) 0 0 / 2px 2px;
}

.dock-group button {
    display: flex;
    align-items: center;
    justify-content: center;
    width: 29px;
    height: 30px;
}

.dock-group .on {
    border: 1px solid #444;
    border-radius: 3px;
    background: linear-gradient(#8e8e8e, #a8a8a8);
}

.fx text {
    font: italic bold 14px "Liberation Serif", serif;
}

/* 任务栏 */
.taskbar {
    display: flex;
    align-items: center;
    height: 30px;
    background: linear-gradient(#4a8cf4, #245edb 15%, #245edb 85%, #1941a5);
    color: #fff;
}

.start {
    display: flex;
    align-items: center;
    gap: 6px;
    width: 97px;
    height: 30px;
    margin-right: 9px;
    padding-left: 10px;
    border-radius: 0 8px 8px 0;
    background: linear-gradient(#6cb866, #379237 20%, #3a983a 80%, #236b23);
    box-shadow: inset -3px 0 4px #1d611d;
    font-size: 19px;
    font-style: italic;
    line-height: 24px;
    text-shadow: 1px 1px 1px #1d4a1d;
}

.task {
    display: flex;
    align-items: center;
    gap: 4px;
    width: 158px;
    height: 25px;
    margin: 3px 3px 0 0;
    padding-left: 10px;
    border-radius: 2px;
    background: linear-gradient(#5f9dfb, #3c80f2 20%, #3577ea);
    font: 10px/16px "Liberation Mono", "Noto Sans CJK SC", monospace;
}

.cjk,
.dragon {
    font-size: 12px;
}

.task.pressed {
    background: #1e50b4;
}

.dragon {
    width: 15px;
    background: #444;
    text-align: center;
}

.mini-ps {
    width: 15px;
    background: #1a8ad4;
    color: #06243e;
    font-weight: bold;
    text-align: center;
}

.keyboard {
    margin: 0 19px 0 auto;
}

.tray {
    display: flex;
    align-items: center;
    width: 95px;
    height: 30px;
    border-left: 1px solid #0c59b9;
    background: linear-gradient(#35b2f8, #0f90ea 20%, #1290e8 85%, #0d6fc0);
    font-size: 11px;
}

.tray-toggle {
    margin: 0 20px 0 -9px;
}

.tray time {
    margin-left: 10px;
}

/* 画笔选取器 */
.picker {
    position: absolute;
    top: 93px;
    left: 14px;
    width: 257px;
    height: 273px;
    padding: 11px 10px 0 4px;
    border: 1px solid #f4f4f4;
    border-right-color: #888;
    border-bottom-color: #888;
    background: #d6d6d6;
}

.picker-head {
    display: flex;
    gap: 18px;
    height: 119px;
    padding-left: 11px;
    border-bottom: 1px solid #888;
}

.picker-controls {
    width: 198px;
}

.field-row {
    display: flex;
    align-items: center;
    justify-content: space-between;
}

.num {
    width: 55px;
    height: 21px;
    padding: 0 3px;
    border: 1px solid #7f9db9;
    font: inherit;
}

.num.wide {
    width: 60px;
}

.slider {
    display: block;
    width: 196px;
    height: 12px;
    margin: 4px 0 0 2px;
    appearance: none;
    background: linear-gradient(#9a9a94 1px, #f4f4ee 1px, #fff) 0 4px / 100% 4px no-repeat;
}

.slider::-webkit-slider-thumb {
    appearance: none;
    width: 9px;
    height: 12px;
    border: 1px solid #6a9a6a;
    border-radius: 4px 4px 1px 1px;
    background: #e8f6e6;
    box-shadow: inset 0 -2px 0 #5cc05c;
}

.hardness {
    margin-top: 37px;
}

.stub {
    width: 4px;
    height: 1px;
    margin: 4px 0 0 1px;
    background: #888;
}

.picker-side {
    display: flex;
    flex-direction: column;
    gap: 13px;
    padding-top: 1px;
}

.brush-box {
    display: flex;
    width: 209px;
    height: 120px;
    margin: 10px 0 0 8px;
    border: 1px solid #888;
    border-right-color: #f4f4f4;
    border-bottom-color: #f4f4f4;
}

.brush-grid {
    display: grid;
    grid-template-columns: repeat(6, 32px);
    grid-auto-rows: 32px;
    width: 193px;
    background: #fff;
    overflow: hidden;
}

.brush-grid button {
    display: flex;
    flex-direction: column;
    border-right: 1px solid #000;
    border-bottom: 1px solid #000;
    align-items: center;
    font-size: 9px;
    line-height: 10px;
}

.xp-scroll {
    display: flex;
    flex-direction: column;
    flex: 1;
    padding: 1px;
    background: #f4f3ee;
}

.xp-scroll button,
.xp-thumb {
    display: flex;
    align-items: center;
    justify-content: center;
    height: 16px;
    border: 1px solid #b0c4f0;
    border-radius: 2px;
    background: linear-gradient(90deg, #d4e0fc, #b4c9f6);
    color: #4d6185;
}

.xp-thumb {
    height: 28px;
}

.xp-scroll .down {
    margin-top: auto;
}

/* 弹出菜单 */
.popup {
    position: absolute;
    top: 121px;
    left: 260px;
    display: flex;
    padding: 1px 0 2px;
    border: 1px solid #aca899;
    background: #fff;
    box-shadow: 3px 3px 2px rgba(0, 0, 0, 0.4);
}

.col {
    display: flex;
    flex-direction: column;
    width: 115px;
    padding: 0 2px;
    border-right: 1px solid #aca899;
}

.col:last-child {
    border-right: none;
}

.col-main {
    width: 158px;
}

.col-wide {
    width: 199px;
}

.col button {
    position: relative;
    height: 16px;
    padding-left: 15px;
    text-align: left;
    line-height: 16px;
}

.col button:disabled {
    color: #aca899;
}

.col .current {
    background: #316ac5;
    color: #fff;
}

.col i {
    font: 10px/16px "Liberation Mono", monospace;
}

.col hr {
    width: 100%;
    height: 1px;
    margin: 4px 0;
    border: none;
    background: #aca899;
}

.checked::before {
    content: "";
    position: absolute;
    top: 4px;
    left: 4px;
    width: 3px;
    height: 6px;
    border: solid #000;
    border-width: 0 2px 2px 0;
    transform: rotate(45deg);
}
```
